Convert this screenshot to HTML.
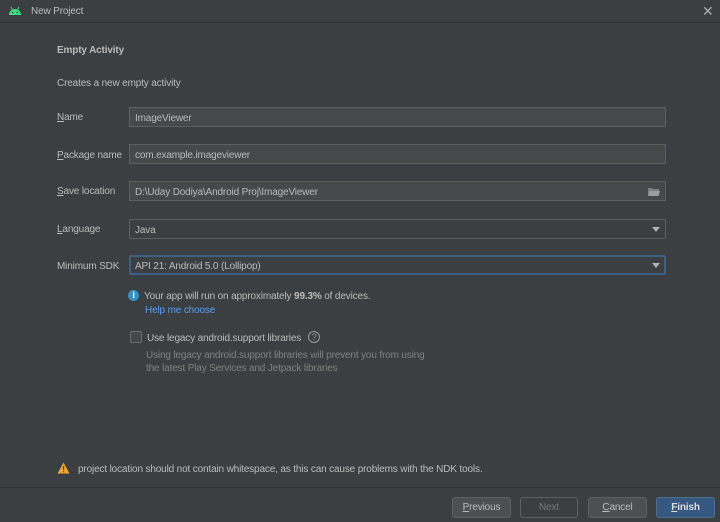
<!DOCTYPE html>
<html><head><style>
*{margin:0;padding:0;box-sizing:border-box}
body{width:720px;height:522px;background:#3c3f41;font-family:"Liberation Sans",sans-serif;font-size:10px;letter-spacing:-0.15px;color:#bbbbbb;position:relative;overflow:hidden}
.a{position:absolute;white-space:nowrap}
.t{margin-top:1px}
.f{position:absolute;left:129px;width:537px;height:20px;border:1px solid #5e6060;background:#45494a;padding-left:5px;line-height:19px;padding-top:1px;color:#bbbbbb}
.dd{background:#3c3f41;border-radius:2px}
.arr{position:absolute;right:5px;top:7px;width:0;height:0;border-left:4px solid transparent;border-right:4px solid transparent;border-top:5px solid #afb1b3}
.btn{position:absolute;top:497px;height:21px;border:1px solid #5e6060;background:#4c5052;border-radius:3px;text-align:center;line-height:20px;color:#bbbbbb}
u{text-decoration:underline}
</style></head><body>
<div class="a" style="left:0;top:22px;width:720px;height:1px;background:#323232"></div>
<svg class="a" style="left:8px;top:6px" width="14" height="10" viewBox="0 0 14 10"><path d="M1 9 A6 6 0 0 1 13 9 Z" fill="#3ddc84"/><line x1="3" y1="1" x2="4.5" y2="4" stroke="#3ddc84" stroke-width="1"/><line x1="11" y1="1" x2="9.5" y2="4" stroke="#3ddc84" stroke-width="1"/><circle cx="4.7" cy="6.5" r=".8" fill="#3c3f41"/><circle cx="9.3" cy="6.5" r=".8" fill="#3c3f41"/></svg>
<div class="a" style="left:31px;top:6px;color:#bbbbbb">New Project</div>
<div class="a" style="left:702px;top:3px;font-size:14px;color:#aaa">✕</div>
<div class="a" style="left:57px;top:45px;font-weight:bold">Empty Activity</div>
<div class="a" style="left:57px;top:78px">Creates a new empty activity</div>
<div class="a" style="left:57px;top:112px"><u>N</u>ame</div>
<div class="f" style="top:107px">ImageViewer</div>
<div class="a" style="left:57px;top:150px"><u>P</u>ackage name</div>
<div class="f" style="top:144px">com.example.imageviewer</div>
<div class="a" style="left:57px;top:186px"><u>S</u>ave location</div>
<div class="f" style="top:181px">D:\Uday Dodiya\Android Proj\ImageViewer
<svg style="position:absolute;right:5px;top:5px" width="12" height="9" viewBox="0 0 12 9"><path d="M0 1h4l1 1h6v7H0z" fill="#7d8082"/><path d="M1.5 4h10.5l-1.5 5H0z" fill="#9a9d9f"/></svg></div>
<div class="a" style="left:57px;top:224px"><u>L</u>anguage</div>
<div class="f dd" style="top:219px">Java<div class="arr"></div></div>
<div class="a" style="left:57px;top:261px">Minimum SDK</div>
<div class="f dd" style="top:255px;border:2px solid #3d6185;padding-left:4px;line-height:17px">API 21: Android 5.0 (Lollipop)<div class="arr" style="right:4px;top:6px"></div></div>
<div class="a" style="left:128px;top:290px;width:11px;height:11px;border-radius:50%;background:#3592c4;color:#fff;font-size:9px;font-weight:bold;text-align:center;line-height:11px">i</div>
<div class="a" style="left:144px;top:291px">Your app will run on approximately <b>99.3%</b> of devices.</div>
<div class="a" style="left:145px;top:305px;color:#589df6">Help me choose</div>
<div class="a" style="left:130px;top:331px;width:12px;height:12px;border:1px solid #6b6b6b;background:#43494a;border-radius:2px"></div>
<div class="a" style="left:147px;top:333px">Use legacy android.support libraries</div>
<div class="a" style="left:308px;top:331px;width:12px;height:12px;border:1px solid #999;border-radius:50%;font-size:9px;text-align:center;line-height:10px;color:#999">?</div>
<div class="a" style="left:146px;top:350px;color:#808080">Using legacy android.support libraries will prevent you from using</div>
<div class="a" style="left:146px;top:363px;color:#808080">the latest Play Services and Jetpack libraries</div>
<svg class="a" style="left:57px;top:462px" width="13" height="12" viewBox="0 0 13 12"><path d="M6.5 0.5L12.5 11.5H0.5Z" fill="#f0a732"/><rect x="6" y="4" width="1.2" height="4" fill="#3c3f41"/><rect x="6" y="9" width="1.2" height="1.2" fill="#3c3f41"/></svg>
<div class="a" style="left:78px;top:464px">project location should not contain whitespace, as this can cause problems with the NDK tools.</div>
<div class="a" style="left:0;top:487px;width:720px;height:1px;background:#323232"></div>
<div class="btn" style="left:452px;width:59px"><u>P</u>revious</div>
<div class="btn" style="left:520px;width:58px;background:#3c3f41;color:#777">Next</div>
<div class="btn" style="left:588px;width:59px"><u>C</u>ancel</div>
<div class="btn" style="left:656px;width:59px;background:#365880;border-color:#4c708c;color:#dddddd;font-weight:bold"><u>F</u>inish</div>
</body></html>
